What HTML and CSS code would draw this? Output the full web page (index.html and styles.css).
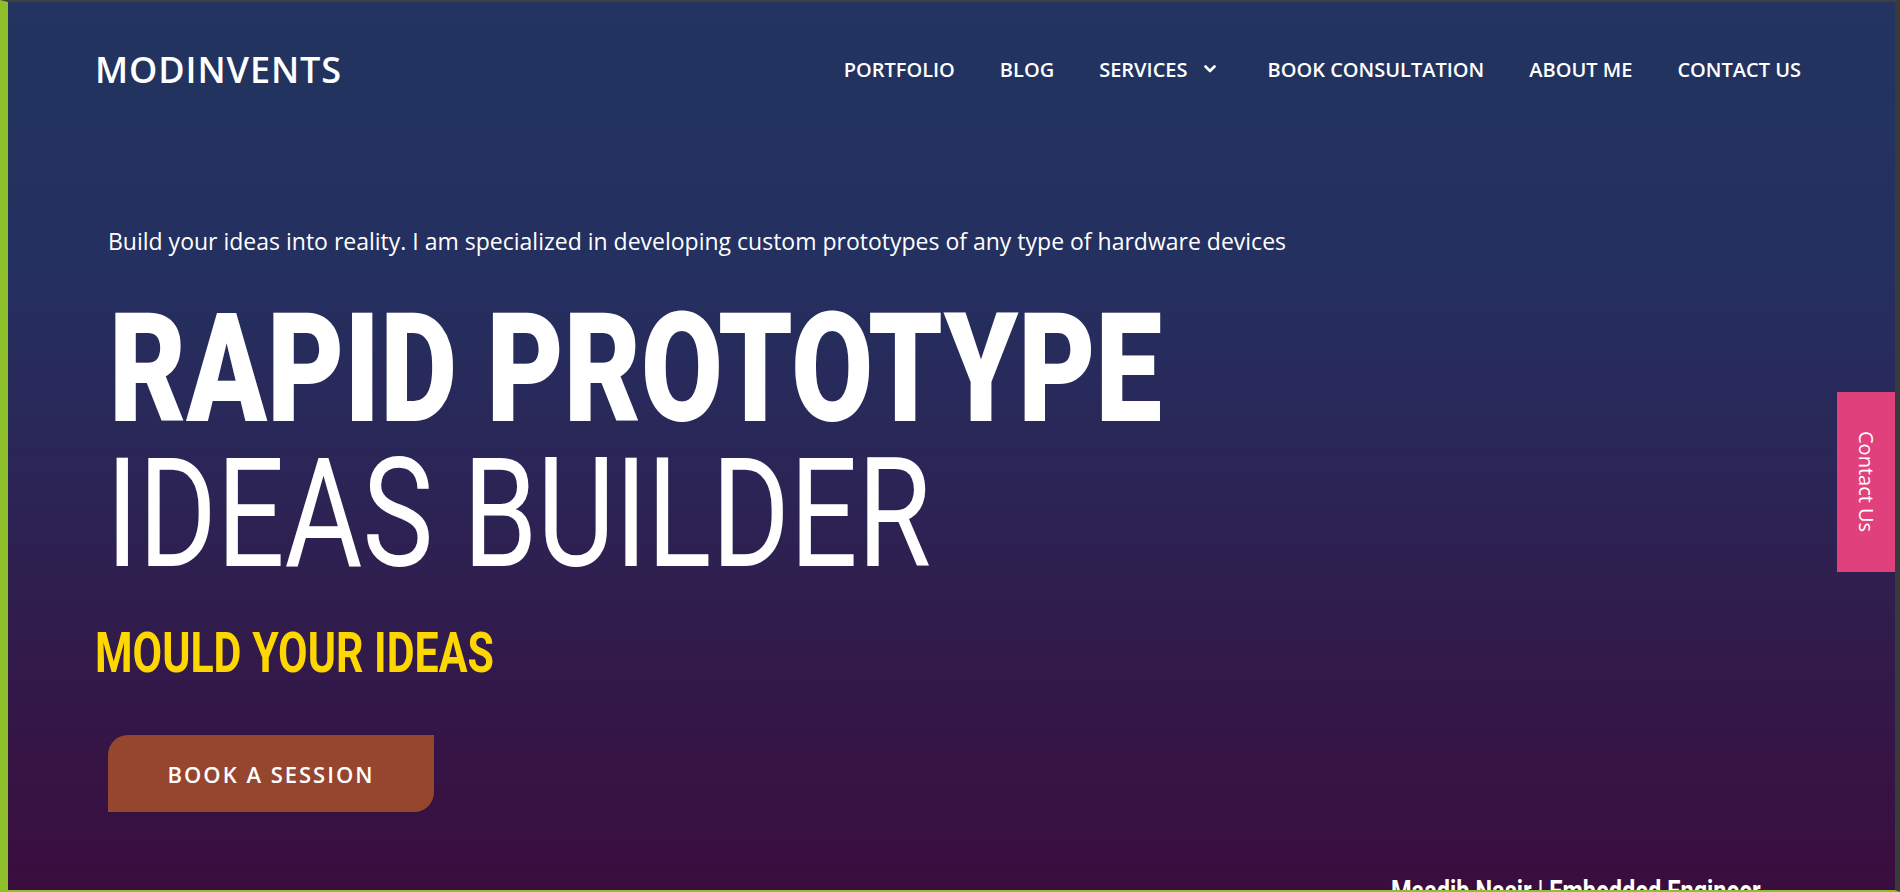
FILE: index.html
```html
<!DOCTYPE html>
<html lang="en">
<head>
<meta charset="utf-8">
<title>Modinvents</title>
<link rel="stylesheet" href="styles.css">
</head>
<body>
<div class="frame">
  <div class="hero">
    <header class="topbar">
      <a class="logo" href="#">MODINVENTS</a>
      <nav class="nav">
        <a href="#">PORTFOLIO</a>
        <a href="#">BLOG</a>
        <a href="#" class="has-sub">SERVICES
          <svg class="chev" viewBox="0 0 12 8" width="12" height="8"><path d="M1.5 1.5 L6 6 L10.5 1.5" fill="none" stroke="#fff" stroke-width="2.6" stroke-linecap="round" stroke-linejoin="round"/></svg>
        </a>
        <a href="#">BOOK CONSULTATION</a>
        <a href="#">ABOUT ME</a>
        <a href="#">CONTACT US</a>
      </nav>
    </header>
    <section class="intro">
      <p class="lead">Build your ideas into reality. I am specialized in developing custom prototypes of any type of hardware devices</p>
      <h1 class="headline"><span class="line bold">RAPID PROTOTYPE</span><span class="line light">IDEAS BUILDER</span></h1>
      <h2 class="tagline">MOULD YOUR IDEAS</h2>
      <a class="btn" href="#">BOOK A SESSION</a>
    </section>
    <div class="signature">Maadib Nasir | Embedded Engineer</div>
  </div>
  <a class="contact-tab" href="#">Contact Us</a>
</div>
</body>
</html>
```

FILE: styles.css
```css
* { box-sizing: border-box; margin: 0; padding: 0; }
html, body { height: 100%; }
body { background: #3a3a3a; font-family: "Open Sans", "Noto Sans", sans-serif; overflow: hidden; }
.frame {
  position: relative;
  height: 892px;
  border-top: 2px solid #3f3f3f;
  border-left: 8px solid #8dc02b;
  border-right: 5px solid #3a3a3a;
  border-bottom: 2px solid #8dc02b;
  overflow: hidden;
}
.hero {
  height: 100%;
  color: #fff;
  background: linear-gradient(180deg, #22345f 0%, #243060 30%, #2a2657 52%, #311b4b 72%, #3a0d3e 100%);
}
.topbar {
  display: flex;
  align-items: center;
  justify-content: space-between;
  height: 134px;
  padding: 0 94px 0 87px;
}
.logo { font-size: 36px; font-weight: 600; color: #fff; text-decoration: none; letter-spacing: 0.9px; }
.nav { display: flex; align-items: center; gap: 45px; }
.nav a { display: flex; align-items: center; gap: 10px; font-size: 20px; font-weight: 600; color: #fff; text-decoration: none; }
.nav .has-sub { gap: 16px; margin-right: 7px; }
.chev { display: block; }
.intro { padding-left: 100px; }
.lead { margin-top: 90px; font-size: 23px; line-height: 30px; }
.headline { margin-top: 40px; margin-left: 1px; font-family: Roboto, "Liberation Sans", sans-serif; font-weight: 400; }
.line { display: block; font-size: 153px; line-height: 145px; white-space: nowrap; transform-origin: left center; }
.bold { font-weight: 900; transform: scaleX(0.775); }
.light { font-weight: 400; transform: scaleX(0.78); margin-left: -3px; }
.tagline { margin-top: 37px; margin-left: -13px; font-family: Roboto, "Liberation Sans", sans-serif; font-size: 56px; line-height: 60px; font-weight: 700; color: #ffd700; white-space: nowrap; transform: scaleX(0.766); transform-origin: left center; }
.btn {
  display: flex; align-items: center; justify-content: center;
  margin-top: 52px; width: 326px; height: 77px;
  background: #96452f; color: #fff; text-decoration: none;
  font-size: 22px; font-weight: 600; letter-spacing: 2px;
  border-radius: 20px 0 20px 0;
}
.signature { margin: 61px 0 0 1383px; font-family: Roboto, sans-serif; font-weight: 700; font-size: 30px; line-height: 36px; white-space: nowrap; transform: scaleX(0.785); transform-origin: left center; }
.contact-tab {
  position: absolute; top: 390px; right: 0;
  width: 58px; height: 180px;
  display: flex; align-items: center; justify-content: center;
  background: #e0407b; color: #fff; text-decoration: none;
  writing-mode: vertical-rl; font-size: 20px;
}
```
